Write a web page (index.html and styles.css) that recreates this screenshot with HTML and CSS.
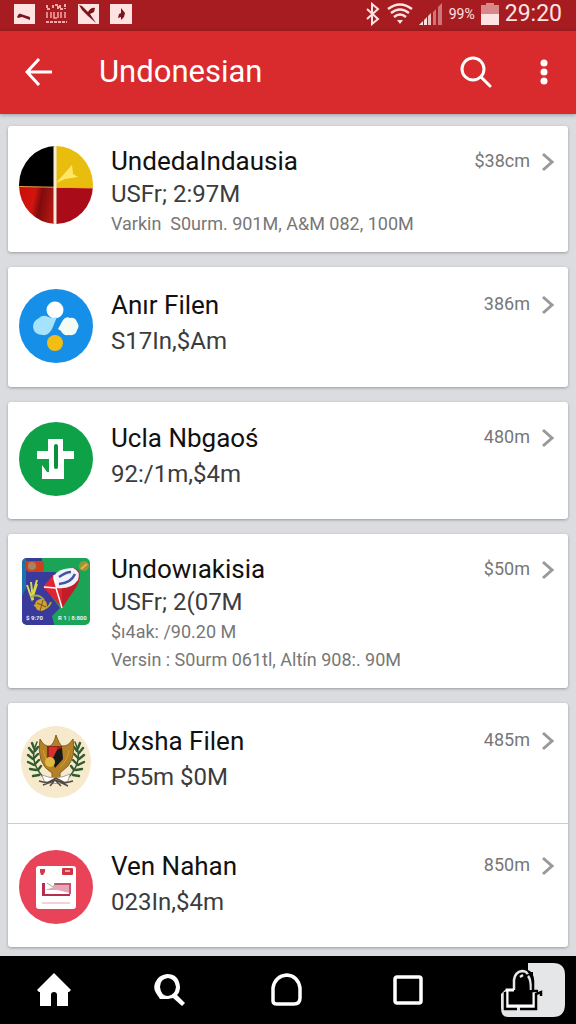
FILE: index.html
```
<!DOCTYPE html>
<html lang="en">
<head>
    <meta charset="UTF-8">
    <meta name="viewport" content="width=device-width, initial-scale=1">
    <title>Undonesian</title>
    <link rel="stylesheet" href="styles.css">
</head>
<body>

<div class="status-bar">
    <div class="status-left">
        <svg width="21" height="20" viewBox="0 0 21 20"><rect width="21" height="20" fill="#ffe3e2"/><path d="M3 13q2-5 4-3l9 3v3l-8-3-4 1z" fill="#7b1519"/></svg>
        <svg width="21" height="20" viewBox="0 0 21 20" fill="none" stroke="#f3a9a9"><path d="M1 1v4h4M7 1v4M9 1h3v4M14 1v4h3M19 0v5M0 18h21" stroke-width="2" stroke-dasharray="3 1"/><path d="M1 8v6M5 8v6M8 8v6h3M12 8v6M15 8v6M19 8v6" stroke-width="1.5"/></svg>
        <svg width="21" height="20" viewBox="0 0 21 20"><rect width="21" height="20" fill="#ffe3e2"/><path d="M1 1l3 1 6 6q3-5 7-4l-1 4-4 2 6 9-8-7-6-6z" fill="#7b1519"/></svg>
        <svg width="22" height="20" viewBox="0 0 22 20"><rect width="22" height="20" fill="#ffe3e2"/><path d="M11 4l4 5-1 4-3 3v-3l-3 1 1-4 2-1z" fill="#7b1519"/></svg>
    </div>
    <div class="status-right">
        <svg width="16" height="24" viewBox="0 0 16 24" fill="none" stroke="#ffe3e2" stroke-width="2"><path d="M2 7l11 10-6 5V2l6 5L2 17"/></svg>
        <svg width="26" height="22" viewBox="0 0 26 22" fill="none" stroke="#ffe3e2" stroke-width="2.4"><path d="M1 6Q13-3 25 6M4 10Q13 3 22 10M7 14q6-5 12 0"/><path d="M10 17l3 4 3-4z" fill="#ffe3e2" stroke="none"/></svg>
        <svg width="24" height="22" viewBox="0 0 24 22" fill="#ffe3e2"><path d="M0 22l4-4v4zM5 17l3-3v8H5z"/><path d="M9 13l3-3v12H9z" opacity=".85"/><path d="M14 9l3-3v16h-3zM19 4l4-4v22h-4z" opacity=".45"/></svg>
        <span class="battery-level">99%</span>
        <svg width="18" height="22" viewBox="0 0 18 22" fill="#ffe3e2"><path d="M0 2h5V0h8v2h5v9H0z" opacity=".55"/><path d="M0 11h18v11H0z"/></svg>
        <span class="clock">29:20</span>
    </div>
</div>

<header class="app-bar">
    <button class="icon-btn" aria-label="Back">
        <svg width="28" height="28" viewBox="0 0 28 28" fill="none" stroke="#fff" stroke-width="3"><path d="M27 14H3M14 1L2 14l12 13"/></svg>
    </button>
    <h1>Undonesian</h1>
    <button class="icon-btn" aria-label="Search">
        <svg width="32" height="32" viewBox="0 0 32 32" fill="none" stroke="#fff" stroke-width="3" stroke-linecap="round"><circle cx="13" cy="13" r="11"/><path d="M21 21l9 9"/></svg>
    </button>
    <button class="icon-btn more" aria-label="More">
        <svg width="8" height="26" viewBox="0 0 8 26" fill="#fff"><circle cx="4" cy="4" r="3.5"/><circle cx="4" cy="13" r="3.5"/><circle cx="4" cy="22" r="3.5"/></svg>
    </button>
</header>

<main class="list">
    <section class="card">
        <a class="row detailed" href="#">
            <svg class="avatar" width="74" height="78" viewBox="0 0 74 78">
                <defs>
                    <clipPath id="flagClip"><ellipse cx="37" cy="39" rx="37" ry="39"/></clipPath>
                    <linearGradient id="flagRed" x2="1" y2=".2"><stop offset="0" stop-color="#c90e0a"/><stop offset=".45" stop-color="#d3140e"/><stop offset=".65" stop-color="#7e0b0c"/><stop offset="1" stop-color="#b11612"/></linearGradient>
                </defs>
                <g clip-path="url(#flagClip)">
                    <path d="M0 0h36v41H0z"/>
                    <path d="M36 0h38v42H36z" fill="#e9bd0e"/>
                    <path d="M0 41h36v37H0z" fill="url(#flagRed)"/>
                    <path d="M37 42h37v36H37z" fill="#a90b18"/>
                    <path d="M0 40.5l74 1.5" stroke="#f0a04b"/>
                    <path d="M36 0v78" stroke="#f5edda" stroke-width="3"/>
                    <path d="M37 37l16-18 1 9 5 3-13 2z" fill="#ffe765"/>
                </g>
            </svg>
            <div class="info">
                <h2>UndedaIndausia</h2>
                <p class="sub">USFr; 2:97M</p>
                <p class="note">Varkin &nbsp;S0urm. 901M, A&amp;M 082, 100M</p>
            </div>
            <span class="amount">$38cm</span>
            <svg class="chevron" width="13" height="20" viewBox="0 0 13 20"><path d="M2 2l9 8-9 8"/></svg>
        </a>
    </section>

    <section class="card">
        <a class="row" href="#">
            <svg class="avatar" width="74" height="74" viewBox="0 0 74 74">
                <circle cx="37" cy="37" r="37" fill="#168fe9"/>
                <circle cx="36" cy="21" r="8.5" fill="#fff"/>
                <path d="M38 28q-6 2-11-1-4-1-7 2-6 3-6 9 1 8 10 8 5 1 9-6z" fill="#a5e3fd"/>
                <path d="M44 31q3-4 7-2 5-1 7 4 3 4 0 8-1 6-8 5-6 1-8-4l-3-2z" fill="#f3fbf4"/>
                <circle cx="36" cy="54" r="8" fill="#f3bd14"/>
            </svg>
            <div class="info">
                <h2>Anır Filen</h2>
                <p class="sub">S17In,$Am</p>
            </div>
            <span class="amount">386m</span>
            <svg class="chevron" width="13" height="20" viewBox="0 0 13 20"><path d="M2 2l9 8-9 8"/></svg>
        </a>
    </section>

    <section class="card">
        <a class="row short" href="#">
            <svg class="avatar" width="74" height="74" viewBox="0 0 74 74">
                <circle cx="37" cy="37" r="37" fill="#0fa148"/>
                <path d="M29 17h15v12h11v8H45v20H23V43l5 7h2V37H18v-8h11z" fill="#fff"/>
                <path d="M37 24v21" stroke="#0b8f3c" stroke-width="4" stroke-linecap="round"/>
                <path d="M28 38v11" stroke="#0fa148" stroke-width="2"/>
            </svg>
            <div class="info">
                <h2>Ucla Nbgaoś</h2>
                <p class="sub">92:/1m,$4m</p>
            </div>
            <span class="amount">480m</span>
            <svg class="chevron" width="13" height="20" viewBox="0 0 13 20"><path d="M2 2l9 8-9 8"/></svg>
        </a>
    </section>

    <section class="card">
        <a class="row detailed" href="#">
            <svg class="avatar" width="74" height="74" viewBox="0 0 74 74">
                <defs><clipPath id="tileClip"><rect x="3" y="4" width="68" height="67" rx="5"/></clipPath></defs>
                <g clip-path="url(#tileClip)">
                    <path d="M0 0h74v74H0z" fill="#1ba456"/>
                    <path d="M0 0h23v18h14l-5 24 9 12-8 8 3 12H0z" fill="#3a399c"/>
                    <path d="M3 4h4v30l-4 8z" fill="#1c72ad"/>
                    <path d="M7 7h16q2 0 2 3v5q0 3-3 3H10q-3-1-3-4z" fill="#c84220"/>
                    <circle cx="13" cy="12" r="4" fill="#a68462"/>
                    <circle cx="65" cy="12" r="5" fill="#9a9538"/><path d="M62 15l6-5" stroke="#efb142" stroke-width="2"/>
                    <path d="M43 54l-7-22q-3-10 8-14 9-7 15-2 4 5-1 16z" fill="#c51c2a"/>
                    <path d="M24 33l11-13 8 12v22z" fill="#df2534"/>
                    <path d="M34 24q4-10 20-10 8 3 5 12-7 10-22 8z" fill="#f0f3fa"/>
                    <path d="M40 30q12-1 16-10M40 23q7-5 12-5" fill="none" stroke="#4054a8" stroke-width="2.5"/>
                    <path d="M25 33l12 1 6 20M35 21l3 13" fill="none" stroke="#fff" stroke-width="1.5"/>
                    <path d="M8 31l5 14 5-15M12 28l2 18M18 26l-5 17" fill="none" stroke="#d8d94a" stroke-width="2"/>
                    <path d="M12 43q7-4 13 3M15 51q13 8 17-3" fill="none" stroke="#a7a83a" stroke-width="2"/>
                    <circle cx="22" cy="51" r="6" fill="#d6a126"/><path d="M18 49l9 4M24 46l-3 11" stroke="#645b30"/>
                    <text class="tile-text" x="7" y="66">$ 9:70</text>
                    <text class="tile-text" x="39" y="66">R 1 | 8:800</text>
                </g>
            </svg>
            <div class="info">
                <h2>Undowıakisia</h2>
                <p class="sub">USFr; 2(07M</p>
                <p class="note">$ı4ak: /90.20 M</p>
                <p class="note">Versin : S0urm 061tl, Altín 908:. 90M</p>
            </div>
            <span class="amount">$50m</span>
            <svg class="chevron" width="13" height="20" viewBox="0 0 13 20"><path d="M2 2l9 8-9 8"/></svg>
        </a>
    </section>

    <section class="card">
        <a class="row" href="#">
            <svg class="avatar" width="74" height="74" viewBox="0 0 74 74">
                <ellipse cx="37" cy="37" rx="35" ry="36" fill="#f7e9cb"/>
                <!-- laurel branches -->
                <g fill="none" stroke="#315b31" stroke-width="2.4" stroke-linecap="round">
                    <path d="M18 17q-9 18 6 35" stroke-width="1.5"/>
                    <path d="M56 17q9 18-6 35" stroke-width="1.5"/>
                    <path d="M15 23l-2-5M14 28l-4-5M14 34l-5-4M15 40l-6-3M17 45l-6-1M20 50l-6 1M16 26l3-4M15 33l4-4M16 39l4-4M19 45l3-4"/>
                    <path d="M59 23l2-5M60 28l4-5M60 34l5-4M59 40l6-3M57 45l6-1M54 50l6 1M58 26l-3-4M59 33l-4-4M58 39l-4-4M55 45l-3-4"/>
                </g>
                <path d="M21 14q4 8 10 7 4-2 6-11 3 9 6 11 6 1 11-7 3 17-5 27l-8 7v5h-8v-5q-16-9-12-34z" fill="#b48126" stroke="#83601f"/>
                <path d="M24 25q3 13 9 17M50 25q-2 12-9 17" fill="none" stroke="#d0a03e"/>
                <path d="M28 21h15v13H28z" fill="#93241c"/>
                <path d="M30 22h8v10h-8z" fill="#d4332a"/>
                <path d="M38 25l5-2 1 11-8 9-3-8z" fill="#17181a"/>
                <circle cx="31" cy="37" r="5" fill="#dfb940"/>
                <path d="M23 50q14 6 28-1l-2 7q-12 5-24 0z" fill="#fff" stroke="#a8a397"/>
                <path d="M20 56l8 2 9-5 9 5 8-2M24 60l13-5 12 6M31 61l5-6 6 6" fill="none" stroke="#55483e" stroke-width="1.5"/>
            </svg>
            <div class="info">
                <h2>Uxsha Filen</h2>
                <p class="sub">P55m $0M</p>
            </div>
            <span class="amount">485m</span>
            <svg class="chevron" width="13" height="20" viewBox="0 0 13 20"><path d="M2 2l9 8-9 8"/></svg>
        </a>
        <a class="row tall" href="#">
            <svg class="avatar" width="74" height="74" viewBox="0 0 74 74">
                <circle cx="37" cy="37" r="37" fill="#e84358"/>
                <rect x="17" y="16" width="40" height="43" rx="3" fill="#fff"/>
                <path d="M21 19h5v3l-2 3h-2l-1-3z" fill="#cf3c4a"/>
                <rect x="43" y="18" width="11" height="7" rx="1" fill="#cf3645"/>
                <path d="M46 21h5" stroke="#f2a4ac" stroke-width="2"/>
                <path d="M35 34h16v9l-13-3H26l9-3z" fill="#e8a5b8"/>
                <path d="M23 33v13h28v-2H26V33z" fill="#b72d4d"/>
                <path d="M35 34h16v10" fill="none" stroke="#c85672" stroke-width="2"/>
                <path d="M28 33l6 4 2-3" fill="none" stroke="#8eb6a1"/>
                <path d="M23 53h28" stroke="#eca3ad"/>
            </svg>
            <div class="info">
                <h2>Ven Nahan</h2>
                <p class="sub">023In,$4m</p>
            </div>
            <span class="amount">850m</span>
            <svg class="chevron" width="13" height="20" viewBox="0 0 13 20"><path d="M2 2l9 8-9 8"/></svg>
        </a>
    </section>
</main>

<nav class="nav-bar">
    <button aria-label="Home">
        <svg width="34" height="34" viewBox="0 0 34 34"><path d="M17 0l17 17-2 2h-1v14H20V22q0-3-3-3t-3 3v11H3V19H2l-2-2z" fill="#fff"/></svg>
    </button>
    <button aria-label="Search">
        <svg width="32" height="34" viewBox="0 0 32 34"><path d="M13 1q12 0 13 13 0 5-3 8l8 8-3 3-9-8-5 1H6l-4-6Q-1 16 1 10 4 2 13 1zm1 4q-8 1-8 9 1 9 8 9 7-1 8-9-1-8-8-9z" fill="#fff" fill-rule="evenodd"/></svg>
    </button>
    <button aria-label="Circle">
        <svg width="32" height="34" viewBox="0 0 32 34" fill="none" stroke="#fff" stroke-width="3.5"><path d="M2 28V15Q4 3 16 2q11 1 13 13v10q0 6-6 6H6q-4 0-4-3z"/></svg>
    </button>
    <button aria-label="Recent apps">
        <svg width="30" height="30" viewBox="0 0 30 30" fill="none" stroke="#fff" stroke-width="3.5"><rect x="2" y="2" width="26" height="26" rx="2"/></svg>
    </button>
    <button aria-label="Keyboard">
        <svg width="66" height="56" viewBox="0 0 66 56">
            <path d="M28 1h25q12 0 12 12v29q0 13-12 13H8q-7 0-7-9V32l4-4h23z" fill="#e5e6e8"/>
            <path d="M0 0h28v10h5v18H0z"/>
            <path d="M5 31v14h32V31h-4V18q0-9-8-9h-5l-7 9v11H5z"/>
            <path d="M14 28V18q1-8 8-9 4 0 6 3M20 15l3-2M28 14q3 3 3 14" fill="none" stroke="#e5e6e8" stroke-width="2.5"/>
            <path d="M14 28H7v16h27V29" fill="none" stroke="#fff" stroke-width="3"/>
            <path d="M5 30v17h12M20 47h16V32l5-2v4M28 9q5 3 5 10v10h5" fill="none" stroke="#000" stroke-width="2.5"/>
        </svg>
    </button>
</nav>

</body>
</html>
```

FILE: styles.css
```
:root {
    --red: #d92b2d;
    --red-dark: #a61c20;
    --bg: #dadce0;
    --grey: #777;
}

* {
    box-sizing: border-box;
}

body {
    margin: 0;
    min-height: 100vh;
    display: flex;
    flex-direction: column;
    font-family: Roboto, sans-serif;
    background: var(--bg);
    color: #111;
}

svg {
    display: block;
    flex-shrink: 0;
}

h1, h2, p {
    margin: 0;
    font-weight: 400;
}

button {
    padding: 0;
    border: none;
    background: none;
    cursor: pointer;
}

/* status bar */
.status-bar {
    display: flex;
    justify-content: space-between;
    align-items: center;
    height: 31px;
    padding: 0 14px 4px;
    background: var(--red-dark);
    color: #ffe3e2;
}

.status-left {
    display: flex;
    gap: 11px;
}

.status-right {
    display: flex;
    align-items: center;
    gap: 6px;
}

.battery-level {
    font-size: 14px;
}

.clock {
    font-size: 23px;
    line-height: 27px;
}

/* app bar */
.app-bar {
    display: flex;
    align-items: center;
    height: 83px;
    padding: 0 28px 2px 25px;
    background: var(--red);
    color: #fff;
    box-shadow: 0 1px 4px rgba(0,0,0,0.3);
}

.app-bar h1 {
    flex: 1;
    margin-left: 46px;
    font-size: 31px;
    line-height: 40px;
}

.more {
    margin-left: 48px;
}

/* cards */
.list {
    flex: 1;
    display: flex;
    flex-direction: column;
    gap: 15px;
    padding: 12px 8px 9px;
}

.card {
    background: #fff;
    border-radius: 3px;
    box-shadow: 0 1px 3px rgba(0,0,0,0.3);
}

.row {
    display: flex;
    align-items: flex-start;
    padding: 20px 14px 24px 11px;
    color: inherit;
    text-decoration: none;
}

.row + .row {
    border-top: 1px solid #ccc;
}

.row.short {
    padding-top: 18px;
    padding-bottom: 23px;
}

.row.tall {
    padding-top: 24px;
    padding-bottom: 23px;
}

.row.detailed {
    padding-top: 18px;
    padding-bottom: 14px;
}

.avatar {
    margin-top: 2px;
}

.info {
    flex: 1;
    min-width: 0;
    margin-left: 18px;
}

.info h2 {
    font-size: 26px;
    line-height: 36px;
}

.sub {
    font-size: 24px;
    line-height: 36px;
    color: #3c3c3c;
}

.note {
    font-size: 18px;
    line-height: 28px;
    color: var(--grey);
}

.detailed h2 {
    line-height: 34px;
}

.detailed .sub {
    line-height: 32px;
}

.amount {
    font-size: 18px;
    line-height: 34px;
    color: var(--grey);
}

.chevron {
    margin: 8px 0 0 11px;
    fill: none;
    stroke: #999;
    stroke-width: 3;
}

.tile-text {
    font-size: 6px;
    font-weight: 700;
    fill: #e8eef8;
}

/* bottom navigation */
.nav-bar {
    display: grid;
    grid-template-columns: 117fr 117fr 122fr 107fr 66px;
    justify-items: start;
    align-items: center;
    height: 68px;
    padding: 0 10px 0 37px;
    background: #000;
}
```
